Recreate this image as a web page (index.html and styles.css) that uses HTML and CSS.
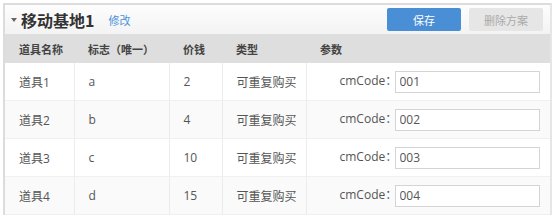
FILE: index.html
```html
<!DOCTYPE html>
<html lang="zh-CN">
<head>
  <meta charset="UTF-8">
  <title>移动基地1</title>
  <link rel="stylesheet" href="styles.css">
</head>
<body>
  <div class="panel">
    <div class="panel-head">
      <div class="title">
        <span class="caret"></span>
        <span class="name">移动基地1</span>
        <a class="edit" href="#">修改</a>
      </div>
      <div class="actions">
        <button class="btn btn-save">保存</button>
        <button class="btn btn-del">删除方案</button>
      </div>
    </div>
    <table class="props">
      <thead>
        <tr>
          <th class="c-name">道具名称</th>
          <th class="c-flag">标志（唯一）</th>
          <th class="c-price">价钱</th>
          <th class="c-type">类型</th>
          <th class="c-param">参数</th>
        </tr>
      </thead>
      <tbody>
        <tr>
          <td>道具1</td><td>a</td><td>2</td><td>可重复购买</td>
          <td class="param"><label>cmCode：</label><input type="text" value="001"></td>
        </tr>
        <tr>
          <td>道具2</td><td>b</td><td>4</td><td>可重复购买</td>
          <td class="param"><label>cmCode：</label><input type="text" value="002"></td>
        </tr>
        <tr>
          <td>道具3</td><td>c</td><td>10</td><td>可重复购买</td>
          <td class="param"><label>cmCode：</label><input type="text" value="003"></td>
        </tr>
        <tr>
          <td>道具4</td><td>d</td><td>15</td><td>可重复购买</td>
          <td class="param"><label>cmCode：</label><input type="text" value="004"></td>
        </tr>
      </tbody>
    </table>
  </div>
</body>
</html>
```

FILE: styles.css
```css
body {
  margin: 0;
  padding: 3px 6px 0 3px;
  font-family: "Open Sans", "Noto Sans CJK SC", sans-serif;
  font-size: 12px;
  color: #555;
  background: #fff;
}
.panel {
  border-top: 2px solid #dcdcdc;
  border-left: 2px solid #dcdcdc;
  border-right: 2px solid #e6e6e6;
}
.panel-head {
  display: flex;
  align-items: center;
  justify-content: space-between;
  height: 29px;
  background: linear-gradient(#fdfdfd, #f3f3f3);
}
.title {
  display: flex;
  align-items: center;
}
.caret {
  width: 0;
  height: 0;
  margin-left: 6px;
  margin-right: 4px;
  border-left: 3px solid transparent;
  border-right: 3px solid transparent;
  border-top: 4px solid #666;
}
.name {
  font-size: 16px;
  font-weight: bold;
  color: #333;
  font-family: "Noto Sans CJK SC", sans-serif;
}
.edit {
  margin-left: 14px;
  font-size: 11px;
  color: #4a90d9;
  text-decoration: none;
}
.actions {
  display: flex;
  gap: 8px;
  margin-right: 7px;
}
.btn {
  width: 74px;
  height: 23px;
  border: none;
  border-radius: 2px;
  font-family: "Noto Sans CJK SC", sans-serif;
  font-size: 11px;
}
.btn-save {
  background: #4a8fd6;
  color: #fff;
}
.btn-del {
  background: #e6e6e6;
  color: #aaa;
}
.props {
  width: 100%;
  border-collapse: collapse;
}
.props th {
  height: 29px;
  background: #dedede;
  text-align: left;
  font-weight: bold;
  color: #444;
  font-family: "Noto Sans CJK SC", sans-serif;
  font-size: 11px;
}
.props td {
  height: 37px;
  border-right: 1px solid #ececec;
  border-bottom: 1px solid #f0f0f0;
}
.props td:last-child {
  border-right: none;
}
.props tbody tr:nth-child(even) td {
  background: #fafafa;
}
.props th, .props td {
  padding: 0 0 0 14px;
}
.c-name { width: 55px; }
.c-flag { width: 81px; }
.c-price { width: 39px; }
.c-type { width: 70px; }
.param {
  white-space: nowrap;
}
.param label {
  display: inline-block;
  margin-left: 19px;
  width: 55px;
}
.param input {
  width: 135px;
  height: 20px;
  padding: 0 4px;
  border: 1px solid #d4d4d4;
  font-family: "Open Sans", sans-serif;
  font-size: 12px;
  color: #555;
  vertical-align: middle;
}
```
